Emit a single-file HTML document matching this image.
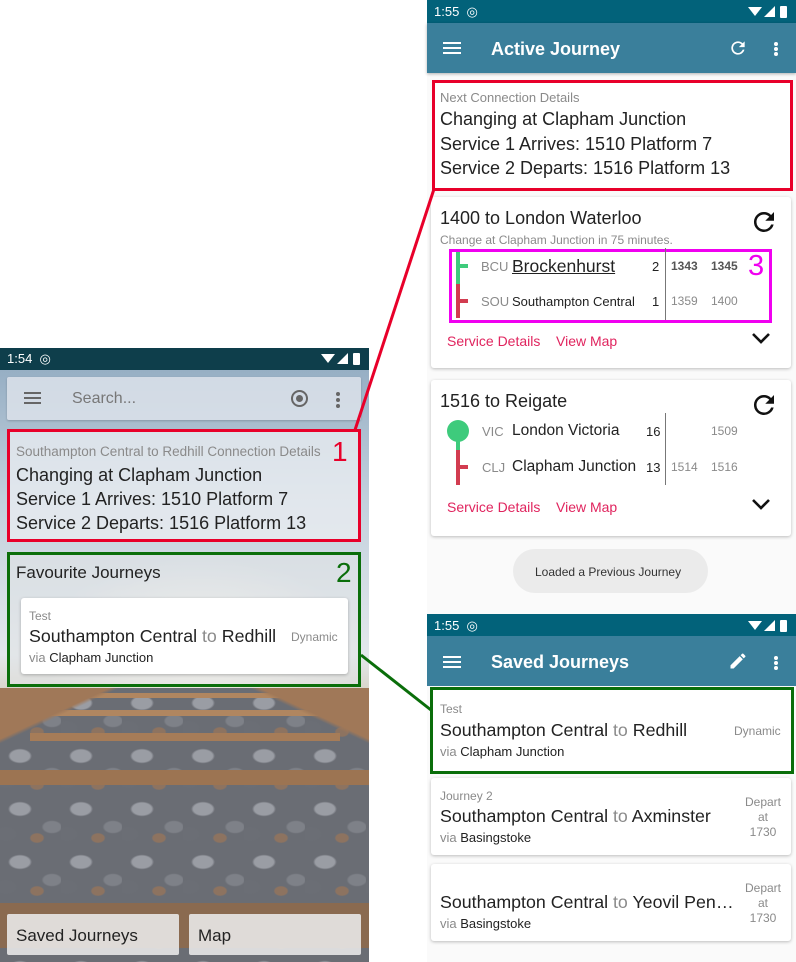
<!DOCTYPE html>
<html><head><meta charset="utf-8"><style>
*{margin:0;padding:0;box-sizing:border-box}
body{width:796px;height:962px;background:#fff;position:relative;overflow:hidden;font-family:"Liberation Sans",sans-serif;color:#222}
.a{position:absolute}
.t{white-space:nowrap}
.g{color:#8a8a8a}
.card{background:#fff;border-radius:3px;box-shadow:0 1px 3px rgba(0,0,0,.25)}
.pink{color:#e0245e}
.rocks{background:
radial-gradient(ellipse 16px 10px at 20px 15px,#9a9da4 60%,transparent 75%),
radial-gradient(ellipse 14px 9px at 52px 33px,#7e8188 60%,transparent 75%),
radial-gradient(ellipse 10px 7px at 37px 44px,#8d7360 60%,transparent 75%),
radial-gradient(ellipse 15px 10px at 6px 40px,#6b6e75 60%,transparent 75%),
#6a6d74;background-size:61px 53px}
</style></head><body>

<!-- LEFT PHONE -->
<div class="a" style="left:0;top:348px;width:369px;height:614px;overflow:hidden;background:radial-gradient(ellipse 160px 90px at 200px 300px,#fbf8ee 0%,rgba(240,238,230,0) 100%),linear-gradient(180deg,#8fa9c0 0%,#c3d1dd 25%,#e3e8ec 50%,#d8d4c8 56%,#8f7a60 60%,#6f6256 64%,#7d7d80 75%,#5d5f66 100%)">
  <div class="a" style="left:0;top:0;width:369px;height:22px;background:#0e3e4b"></div>
  <div class="a t" style="left:7px;top:3px;color:#fff;font-size:13px">1:54 &nbsp;◎</div>
  <svg class="a" style="right:6px;top:4px" width="42" height="14"><path d="M0 2h14L7 11z" fill="#fff"/><path d="M16 12L27 1v11z" fill="#fff"/><rect x="32" y="1" width="7" height="12" rx="1" fill="#fff"/></svg>
  <!-- tracks -->
  <div class="a rocks" style="left:0;top:340px;width:369px;height:274px"></div>
  <div class="a" style="left:60px;top:345px;width:250px;height:5px;background:#b08660"></div>
  <div class="a" style="left:45px;top:362px;width:280px;height:6px;background:#b08660"></div>
  <div class="a" style="left:30px;top:385px;width:310px;height:8px;background:#a67c58"></div>
  <div class="a" style="left:0;top:422px;width:369px;height:15px;background:#9c7452"></div>
  <div class="a" style="left:0;top:555px;width:369px;height:45px;background:#8a6a50"></div>
  <div class="a" style="left:0;top:340px;width:369px;height:60px;background:linear-gradient(155deg,#a07858 22%,transparent 24%),linear-gradient(205deg,#a07858 22%,transparent 24%)"></div>
  <!-- search bar -->
  <div class="a" style="left:7px;top:29px;width:354px;height:43px;background:rgba(220,226,234,.85);border-radius:2px;box-shadow:0 1px 2px rgba(0,0,0,.2)"></div>
  <div class="a" style="left:24px;top:44px;width:17px;height:2px;background:#666;box-shadow:0 5px 0 #666,0 10px 0 #666"></div>
  <div class="a t" style="left:72px;top:42px;font-size:16px;color:#777">Search...</div>
  <div class="a" style="left:291px;top:42px;width:17px;height:17px;border:2px solid #666;border-radius:50%"></div>
  <div class="a" style="left:296px;top:47px;width:7px;height:7px;background:#666;border-radius:50%"></div>
  <div class="a" style="left:336px;top:44px;width:4px;height:4px;background:#666;border-radius:50%;box-shadow:0 6px 0 #666,0 12px 0 #666"></div>
  <!-- connection -->
  <div class="a" style="left:7px;top:81px;width:354px;height:113px;background:rgba(235,238,242,.75);border:3px solid #e8002a"></div>
  <div class="a t g" style="left:16px;top:96px;font-size:13.5px">Southampton Central to Redhill Connection Details</div>
  <div class="a t" style="left:332px;top:88px;font-size:28px;color:#e8002a">1</div>
  <div class="a t" style="left:16px;top:115px;font-size:18px;line-height:24px">Changing at Clapham Junction<br>Service 1 Arrives: 1510 Platform 7<br>Service 2 Departs: 1516 Platform 13</div>
  <!-- favourites -->
  <div class="a" style="left:7px;top:204px;width:354px;height:135px;background:rgba(225,228,230,.55);border:3px solid #0a6e0a"></div>
  <div class="a t" style="left:16px;top:215px;font-size:17px">Favourite Journeys</div>
  <div class="a t" style="left:336px;top:209px;font-size:28px;color:#0a6e0a">2</div>
  <div class="a card" style="left:21px;top:250px;width:327px;height:76px"></div>
  <div class="a t g" style="left:29px;top:261px;font-size:12px">Test</div>
  <div class="a t" style="left:29px;top:278px;font-size:17.8px">Southampton Central <span class="g">to</span> Redhill</div>
  <div class="a t g" style="left:291px;top:282px;font-size:12px">Dynamic</div>
  <div class="a t" style="left:29px;top:302px;font-size:13px"><span class="g">via</span> Clapham Junction</div>
  <!-- buttons -->
  <div class="a" style="left:7px;top:566px;width:172px;height:41px;background:rgba(235,235,235,.88);border-radius:2px"></div>
  <div class="a t" style="left:16px;top:578px;font-size:17px">Saved Journeys</div>
  <div class="a" style="left:189px;top:566px;width:172px;height:41px;background:rgba(235,235,235,.88);border-radius:2px"></div>
  <div class="a t" style="left:198px;top:578px;font-size:17px">Map</div>
</div>

<!-- RIGHT PHONE TOP -->
<div class="a" style="left:427px;top:0;width:369px;height:614px;background:#fafafa">
  <div class="a" style="left:0;top:0;width:369px;height:23px;background:#02627a"></div>
  <div class="a t" style="left:7px;top:4px;color:#fff;font-size:13px">1:55 &nbsp;◎</div>
  <svg class="a" style="right:6px;top:5px" width="42" height="14"><path d="M0 2h14L7 11z" fill="#fff"/><path d="M16 12L27 1v11z" fill="#fff"/><rect x="32" y="1" width="7" height="12" rx="1" fill="#fff"/></svg>
  <div class="a" style="left:0;top:23px;width:369px;height:50px;background:#3a7f9b;box-shadow:0 1px 3px rgba(0,0,0,.3)"></div>
  <div class="a" style="left:16px;top:42px;width:18px;height:2px;background:#fff;box-shadow:0 5px 0 #fff,0 10px 0 #fff"></div>
  <div class="a t" style="left:64px;top:39px;color:#fff;font-size:18px;font-weight:bold">Active Journey</div>
  <svg class="a" style="left:301px;top:38px" width="20" height="20" viewBox="0 0 24 24"><path d="M17.65 6.35A7.95 7.95 0 0 0 12 4a8 8 0 1 0 7.73 10h-2.08A6 6 0 1 1 12 6c1.66 0 3.14.69 4.22 1.78L13 11h7V4l-2.35 2.35z" fill="#fff"/></svg>
  <div class="a" style="left:347px;top:42px;width:4px;height:4px;background:#fff;border-radius:50%;box-shadow:0 5px 0 #fff,0 10px 0 #fff"></div>
  <!-- connection -->
  <div class="a" style="left:5px;top:80px;width:361px;height:111px;background:#fff;border:3px solid #e8002a"></div>
  <div class="a t g" style="left:13px;top:90px;font-size:13px">Next Connection Details</div>
  <div class="a t" style="left:13px;top:107px;font-size:18px;line-height:24.5px">Changing at Clapham Junction<br>Service 1 Arrives: 1510 Platform 7<br>Service 2 Departs: 1516 Platform 13</div>
  <!-- card 1 -->
  <div class="a card" style="left:4px;top:197px;width:360px;height:171px"></div>
  <div class="a t" style="left:13px;top:208px;font-size:18px">1400 to London Waterloo</div>
  <svg class="a" style="left:322px;top:207px" width="30" height="30" viewBox="0 0 24 24"><path d="M17.65 6.35A7.95 7.95 0 0 0 12 4a8 8 0 1 0 7.73 10h-2.08A6 6 0 1 1 12 6c1.66 0 3.140.69 4.22 1.78L13 11h7V4l-2.35 2.35z" fill="#111"/></svg>
  <div class="a t g" style="left:13px;top:233px;font-size:12px">Change at Clapham Junction in 75 minutes.</div>
  <div class="a" style="left:22px;top:249px;width:323px;height:74px;border:3px solid #f000f0"></div>
  <div class="a" style="left:29px;top:252px;width:4px;height:32px;background:#3ecb7c"></div>
  <div class="a" style="left:29px;top:264px;width:12px;height:4px;background:#3ecb7c"></div>
  <div class="a" style="left:29px;top:284px;width:4px;height:34px;background:#d23c50"></div>
  <div class="a" style="left:29px;top:299px;width:12px;height:4px;background:#d23c50"></div>
  <div class="a t g" style="left:54px;top:259px;font-size:13px">BCU</div>
  <div class="a t" style="left:85px;top:256px;font-size:17.5px;text-decoration:underline">Brockenhurst</div>
  <div class="a t" style="left:225px;top:259px;font-size:13px">2</div>
  <div class="a" style="left:238px;top:248px;width:1px;height:72px;background:#777"></div>
  <div class="a t" style="left:244px;top:259px;font-size:12px;font-weight:bold;color:#555">1343</div>
  <div class="a t" style="left:284px;top:259px;font-size:12px;font-weight:bold;color:#555">1345</div>
  <div class="a t" style="left:321px;top:250px;font-size:29px;color:#f000f0">3</div>
  <div class="a t g" style="left:54px;top:294px;font-size:13px">SOU</div>
  <div class="a t" style="left:85px;top:294px;font-size:13px">Southampton Central</div>
  <div class="a t" style="left:225px;top:294px;font-size:13px">1</div>
  <div class="a t g" style="left:244px;top:294px;font-size:12px">1359</div>
  <div class="a t g" style="left:284px;top:294px;font-size:12px">1400</div>
  <div class="a t pink" style="left:20px;top:333px;font-size:14px">Service Details</div>
  <div class="a t pink" style="left:129px;top:333px;font-size:14px">View Map</div>
  <svg class="a" style="left:324px;top:331px" width="20" height="14"><path d="M2 3l8 8 8-8" stroke="#111" stroke-width="2.6" fill="none"/></svg>
  <!-- card 2 -->
  <div class="a card" style="left:4px;top:380px;width:360px;height:156px"></div>
  <div class="a t" style="left:13px;top:391px;font-size:18px">1516 to Reigate</div>
  <svg class="a" style="left:322px;top:390px" width="30" height="30" viewBox="0 0 24 24"><path d="M17.65 6.35A7.95 7.95 0 0 0 12 4a8 8 0 1 0 7.73 10h-2.08A6 6 0 1 1 12 6c1.66 0 3.14.69 4.22 1.78L13 11h7V4l-2.35 2.35z" fill="#111"/></svg>
  <div class="a" style="left:20px;top:420px;width:22px;height:22px;background:#3ecb7c;border-radius:50%"></div>
  <div class="a" style="left:29px;top:440px;width:4px;height:10px;background:#3ecb7c"></div>
  <div class="a" style="left:29px;top:450px;width:4px;height:35px;background:#d23c50"></div>
  <div class="a" style="left:29px;top:465px;width:12px;height:4px;background:#d23c50"></div>
  <div class="a t g" style="left:55px;top:424px;font-size:13px">VIC</div>
  <div class="a t" style="left:85px;top:422px;font-size:15.5px">London Victoria</div>
  <div class="a t" style="left:219px;top:424px;font-size:13px">16</div>
  <div class="a" style="left:238px;top:413px;width:1px;height:72px;background:#777"></div>
  <div class="a t g" style="left:284px;top:424px;font-size:12px">1509</div>
  <div class="a t g" style="left:55px;top:460px;font-size:13px">CLJ</div>
  <div class="a t" style="left:85px;top:458px;font-size:15.5px">Clapham Junction</div>
  <div class="a t" style="left:219px;top:460px;font-size:13px">13</div>
  <div class="a t g" style="left:244px;top:460px;font-size:12px">1514</div>
  <div class="a t g" style="left:284px;top:460px;font-size:12px">1516</div>
  <div class="a t pink" style="left:20px;top:499px;font-size:14px">Service Details</div>
  <div class="a t pink" style="left:129px;top:499px;font-size:14px">View Map</div>
  <svg class="a" style="left:324px;top:497px" width="20" height="14"><path d="M2 3l8 8 8-8" stroke="#111" stroke-width="2.6" fill="none"/></svg>
  <!-- toast -->
  <div class="a" style="left:86px;top:549px;width:195px;height:44px;background:#ebebeb;border-radius:22px"></div>
  <div class="a t" style="left:108px;top:565px;font-size:12px;color:#333">Loaded a Previous Journey</div>
</div>

<!-- RIGHT PHONE BOTTOM -->
<div class="a" style="left:427px;top:614px;width:369px;height:348px;background:#fafafa">
  <div class="a" style="left:0;top:0;width:369px;height:22px;background:#02627a"></div>
  <div class="a t" style="left:7px;top:4px;color:#fff;font-size:13px">1:55 &nbsp;◎</div>
  <svg class="a" style="right:6px;top:5px" width="42" height="14"><path d="M0 2h14L7 11z" fill="#fff"/><path d="M16 12L27 1v11z" fill="#fff"/><rect x="32" y="1" width="7" height="12" rx="1" fill="#fff"/></svg>
  <div class="a" style="left:0;top:22px;width:369px;height:50px;background:#3a7f9b"></div>
  <div class="a" style="left:16px;top:42px;width:18px;height:2px;background:#fff;box-shadow:0 5px 0 #fff,0 10px 0 #fff"></div>
  <div class="a t" style="left:64px;top:38px;color:#fff;font-size:18px;font-weight:bold">Saved Journeys</div>
  <svg class="a" style="left:301px;top:37px" width="20" height="20" viewBox="0 0 24 24"><path d="M3 17.25V21h3.75L17.81 9.94l-3.75-3.75L3 17.25zM20.71 7.04a1 1 0 0 0 0-1.41l-2.34-2.34a1 1 0 0 0-1.41 0l-1.830 1.83 3.75 3.75 1.83-1.83z" fill="#fff"/></svg>
  <div class="a" style="left:347px;top:42px;width:4px;height:4px;background:#fff;border-radius:50%;box-shadow:0 5px 0 #fff,0 10px 0 #fff"></div>
  <!-- saved 1 -->
  <div class="a" style="left:3px;top:73px;width:364px;height:87px;background:#fff;border:3px solid #0a6e0a"></div>
  <div class="a t g" style="left:13px;top:88px;font-size:12px">Test</div>
  <div class="a t" style="left:13px;top:106px;font-size:17.8px">Southampton Central <span class="g">to</span> Redhill</div>
  <div class="a t g" style="left:307px;top:110px;font-size:12px">Dynamic</div>
  <div class="a t" style="left:13px;top:130px;font-size:13px"><span class="g">via</span> Clapham Junction</div>
  <!-- saved 2 -->
  <div class="a card" style="left:4px;top:164px;width:360px;height:77px"></div>
  <div class="a t g" style="left:13px;top:175px;font-size:12px">Journey 2</div>
  <div class="a t" style="left:13px;top:192px;font-size:17.8px">Southampton Central <span class="g">to</span> Axminster</div>
  <div class="a t" style="left:13px;top:216px;font-size:13px"><span class="g">via</span> Basingstoke</div>
  <div class="a g" style="left:314px;top:181px;width:44px;font-size:12px;line-height:15px;text-align:center">Depart<br>at<br>1730</div>
  <!-- saved 3 -->
  <div class="a card" style="left:4px;top:250px;width:360px;height:77px"></div>
  <div class="a t" style="left:13px;top:278px;font-size:17.8px">Southampton Central <span class="g">to</span> Yeovil Pen…</div>
  <div class="a t" style="left:13px;top:302px;font-size:13px"><span class="g">via</span> Basingstoke</div>
  <div class="a g" style="left:314px;top:267px;width:44px;font-size:12px;line-height:15px;text-align:center">Depart<br>at<br>1730</div>
</div>

<!-- connector lines -->
<svg class="a" style="left:0;top:0" width="796" height="962">
  <line x1="355" y1="430" x2="434" y2="189" stroke="#e8002a" stroke-width="3"/>
  <line x1="361" y1="655" x2="431" y2="710" stroke="#0a6e0a" stroke-width="3"/>
</svg>
</body></html>
